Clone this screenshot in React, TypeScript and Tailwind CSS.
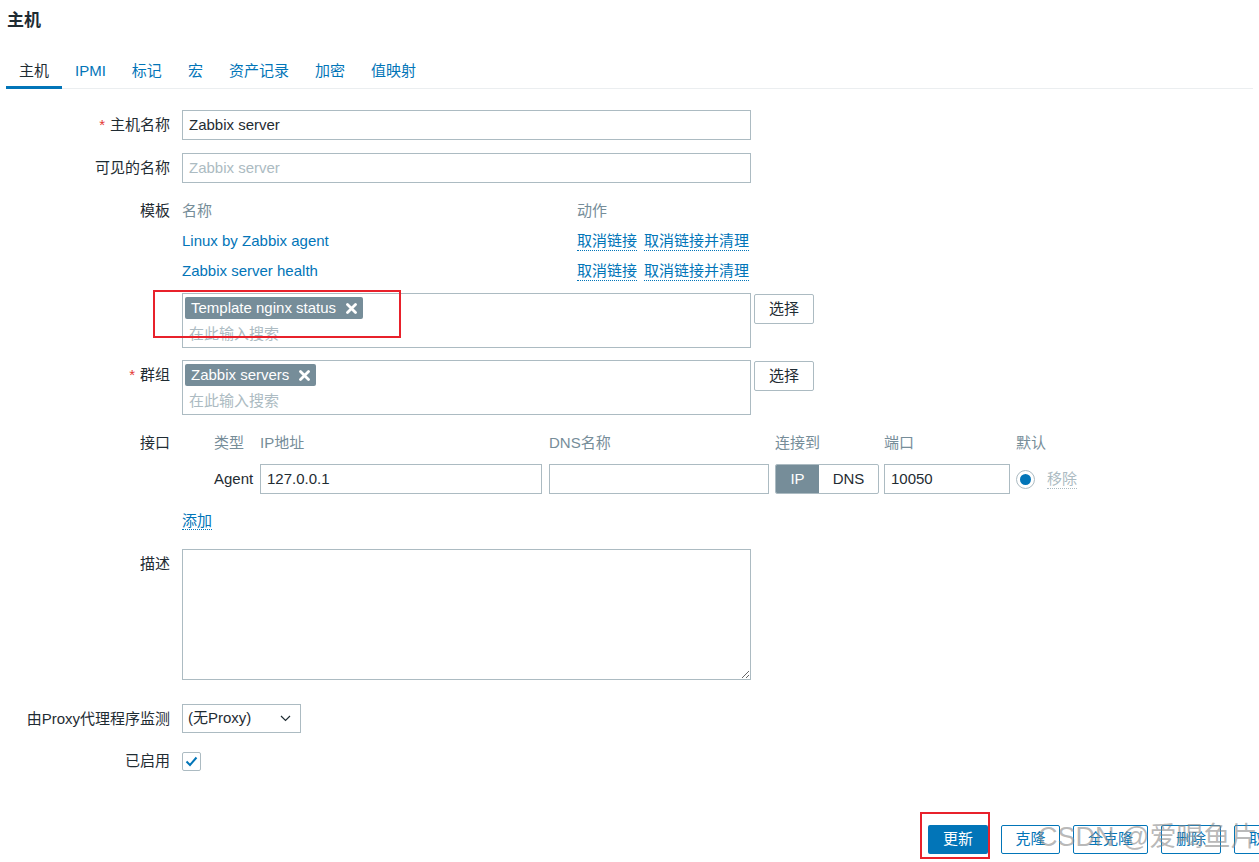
import React from "react";

const font = { fontFamily: '"Liberation Sans", Arial, "Noto Sans CJK SC", sans-serif' };

const tabs = ["主机", "IPMI", "标记", "宏", "资产记录", "加密", "值映射"];

function Label({ children, required }: { children: React.ReactNode; required?: boolean }) {
  return (
    <div className="w-[170px] shrink-0 h-[30px] flex items-center justify-end text-[#1f2c33] whitespace-nowrap">
      {required && <span className="text-[#e33734] mr-[5px]">*</span>}
      {children}
    </div>
  );
}

function Row({ label, required, children, className = "" }: { label: React.ReactNode; required?: boolean; children: React.ReactNode; className?: string }) {
  return (
    <div className={`flex items-start gap-[12px] ${className}`}>
      <Label required={required}>{label}</Label>
      <div className="flex-1 min-w-0">{children}</div>
    </div>
  );
}

function CloseX() {
  return (
    <svg width="11" height="11" viewBox="0 0 11 11" className="ml-[10px]">
      <path d="M1.5 1.5 L9.5 9.5 M9.5 1.5 L1.5 9.5" stroke="#fff" strokeWidth="2.8" strokeLinecap="round" />
    </svg>
  );
}

function Tag({ text }: { text: string }) {
  return (
    <div className="inline-flex items-center h-[22px] bg-[#768d99] text-white rounded-[2px] pl-[6px] pr-[6px] leading-[22px]">
      {text}
      <CloseX />
    </div>
  );
}

function MultiSelect({ tag }: { tag: string }) {
  return (
    <div className="flex items-start gap-[3px]">
      <div className="w-[569px] h-[55px] border border-[#acbbc2] pt-[3px] pl-[2px]">
        <Tag text={tag} />
        <div className="pl-[4px] text-[#acbbc2] leading-[20px] mt-[4px]">在此输入搜索</div>
      </div>
      <button className="w-[60px] h-[30px] border border-[#acbbc2] rounded-[2px] bg-white text-[#1f2c33] mt-[1px]">选择</button>
    </div>
  );
}

export default function App() {
  return (
    <div style={font} className="relative w-[1259px] h-[862px] overflow-hidden bg-white text-[15px] text-[#1f2c33]">
      <div className="px-[6px]">
        <div className="h-[50px] pt-[10px] pl-[1px] text-[17px] leading-[22px] font-bold text-[#1f2c33]">主机</div>
        <div className="flex border-b border-[#ebeef0]">
          {tabs.map((t, i) => (
            <div
              key={t}
              className={`px-[13px] pt-[11px] pb-[5px] leading-[20px] border-b-[3px] -mb-px ${i === 0 ? "border-[#0275b8] text-[#1f2c33]" : "border-transparent text-[#0275b8]"}`}
            >
              {t}
            </div>
          ))}
        </div>
      </div>

      <div className="pt-[21px]">
        <Row label="主机名称" required>
          <div className="w-[569px] h-[30px] border border-[#acbbc2] px-[6px] flex items-center">Zabbix server</div>
        </Row>

        <Row label="可见的名称" className="mt-[13px]">
          <div className="w-[569px] h-[30px] border border-[#acbbc2] px-[6px] flex items-center text-[#acbbc2]">Zabbix server</div>
        </Row>

        <Row label="模板" className="mt-[13px]">
          <div className="w-[569px]">
            <div className="flex h-[30px] items-center text-[#768d99]">
              <div className="w-[395px]">名称</div>
              <div>动作</div>
            </div>
            {["Linux by Zabbix agent", "Zabbix server health"].map((n) => (
              <div key={n} className="flex h-[30px] items-center">
                <div className="w-[395px] text-[#0275b8]">{n}</div>
                <div className="flex gap-[7px] text-[#0275b8] leading-[18px]">
                  <span className="border-b border-dotted border-[#0275b8]">取消链接</span>
                  <span className="border-b border-dotted border-[#0275b8]">取消链接并清理</span>
                </div>
              </div>
            ))}
          </div>
          <div className="relative mt-[7px]">
            <MultiSelect tag="Template nginx status" />
            <div className="absolute left-[-29px] top-[-3px] w-[248px] h-[48px] border-2 border-[#e8212b]" />
          </div>
        </Row>

        <Row label="群组" required className="mt-[12px]">
          <MultiSelect tag="Zabbix servers" />
        </Row>

        <Row label="接口" className="mt-[13px]">
          <div className="flex h-[30px] items-center text-[#768d99]">
            <div className="w-[78px] pl-[32px]">类型</div>
            <div className="w-[289px]">IP地址</div>
            <div className="w-[226px]">DNS名称</div>
            <div className="w-[109px]">连接到</div>
            <div className="w-[132px]">端口</div>
            <div>默认</div>
          </div>
          <div className="flex items-center h-[30px] mt-[6px]">
            <div className="w-[78px] pl-[32px] text-[#1f2c33]">Agent</div>
            <div className="w-[282px] h-[30px] border border-[#acbbc2] px-[6px] flex items-center">127.0.0.1</div>
            <div className="w-[220px] h-[30px] border border-[#acbbc2] ml-[7px]" />
            <div className="ml-[6px] w-[104px] h-[30px] border border-[#acbbc2] rounded-[2px] flex overflow-hidden">
              <div className="w-[43px] bg-[#768d99] text-white flex items-center justify-center">IP</div>
              <div className="flex-1 flex items-center justify-center text-[#1f2c33]">DNS</div>
            </div>
            <div className="ml-[5px] w-[126px] h-[30px] border border-[#acbbc2] px-[6px] flex items-center">10050</div>
            <div className="ml-[6px] w-[19px] h-[19px] rounded-full border border-[#acbbc2] flex items-center justify-center">
              <div className="w-[11px] h-[11px] rounded-full bg-[#0275b8]" />
            </div>
            <span className="ml-[12px] text-[#acbbc2] leading-[18px] border-b border-dotted border-[#acbbc2]">移除</span>
          </div>
          <div className="mt-[16px] h-[20px]">
            <span className="text-[#0275b8] leading-[18px] border-b border-dotted border-[#0275b8]">添加</span>
          </div>
        </Row>

        <Row label="描述" className="mt-[19px]">
          <textarea className="block w-[569px] h-[131px] border border-[#acbbc2] outline-none" />
        </Row>

        <Row label="由Proxy代理程序监测" className="mt-[24px]">
          <div className="w-[119px] h-[29px] border border-[#acbbc2] flex items-center justify-between pl-[5px] pr-[9px]">
            <span>(无Proxy)</span>
            <svg width="11" height="7" viewBox="0 0 11 7">
              <path d="M1 1 L5.5 5.5 L10 1" fill="none" stroke="#1f2c33" strokeWidth="1.2" />
            </svg>
          </div>
        </Row>

        <Row label="已启用" className="mt-[12px]">
          <div className="h-[30px] flex items-center">
            <div className="w-[19px] h-[19px] border border-[#acbbc2] rounded-[2px] flex items-center justify-center">
              <svg width="13" height="11" viewBox="0 0 13 11">
                <path d="M1.5 5.5 L5 9 L11.5 1.5" fill="none" stroke="#0275b8" strokeWidth="2" />
              </svg>
            </div>
          </div>
        </Row>

        <div className="flex gap-[13px] pl-[928px] mt-[49px] whitespace-nowrap">
          <div className="relative shrink-0">
            <button className="w-[60px] h-[29px] bg-[#0275b8] text-white rounded-[2px]">更新</button>
            <div className="absolute left-[-8px] top-[-13px] w-[70px] h-[47px] border-2 border-[#e8212b]" />
          </div>
          <button className="shrink-0 w-[59px] h-[29px] border border-[#0275b8] text-[#0275b8] rounded-[2px] bg-white">克隆</button>
          <button className="shrink-0 w-[75px] h-[29px] border border-[#0275b8] text-[#0275b8] rounded-[2px] bg-white">全克隆</button>
          <button className="shrink-0 w-[60px] h-[29px] border border-[#0275b8] text-[#0275b8] rounded-[2px] bg-white">删除</button>
          <button className="shrink-0 w-[60px] h-[29px] border border-[#0275b8] text-[#0275b8] rounded-[2px] bg-white">取消</button>
        </div>
      </div>

      <div className="absolute left-[1038px] top-[820px] text-[27px] leading-[34px] text-[#8a8a8a]/60 whitespace-nowrap pointer-events-none">
        CSDN @爱喝鱼片汤
      </div>
    </div>
  );
}
